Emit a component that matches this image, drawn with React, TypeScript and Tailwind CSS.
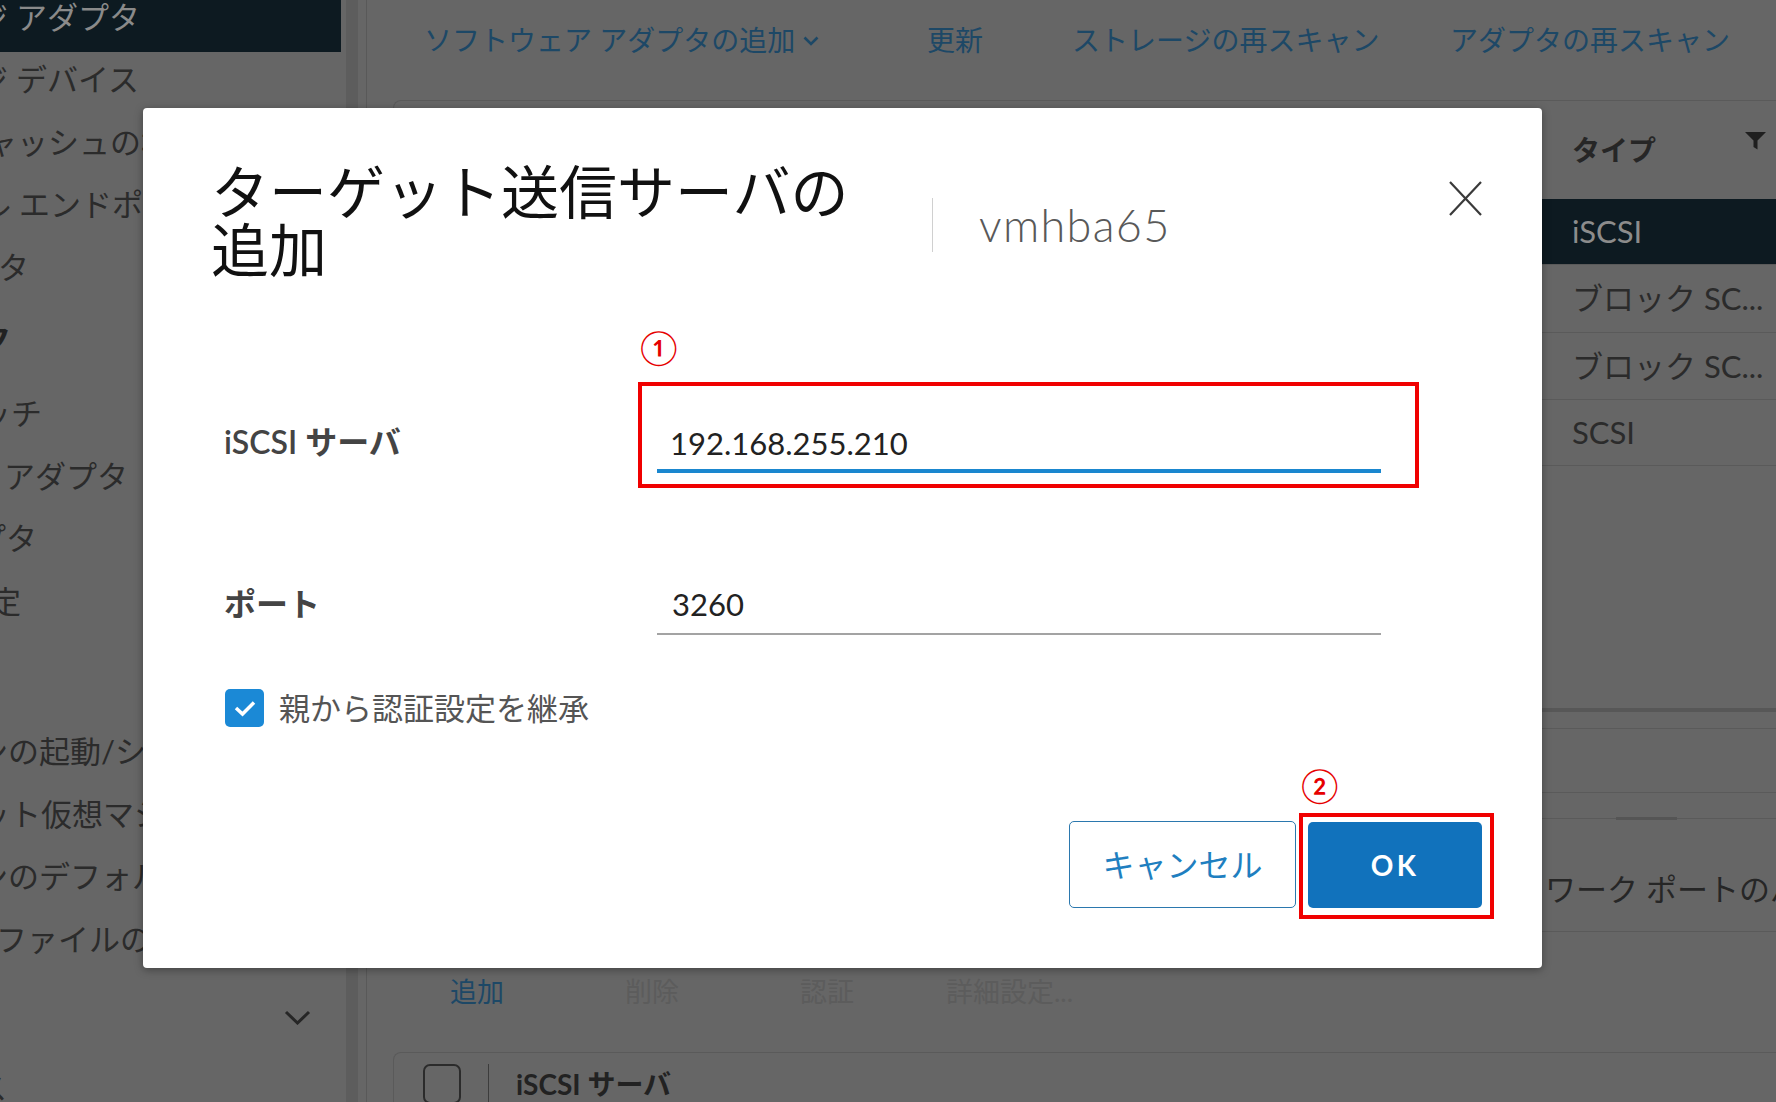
import React from "react";

const NAV = [
  { t: "ジ アダプタ", cls: "ml-[-23px]", row: "h-[62.5px] mt-[-10.5px] pb-[8px] bg-[#0d1a21] text-[#8a8a8a]" },
  { t: "ジ デバイス", cls: "ml-[-23px]", row: "h-[62.5px] pb-[8px]" },
  { t: "ャッシュの構成", cls: "ml-[-14px]", row: "h-[62.5px] pb-[8px]" },
  { t: "ル エンドポイント", cls: "ml-[-20px]", row: "h-[62.5px] pb-[8px]" },
  { t: "ルタ", cls: "ml-[-33px]", row: "h-[62.5px] pb-[8px]" },
  { t: "ク", cls: "ml-[-20px] font-bold text-[#222]", row: "h-[84px] pb-[12px]" },
  { t: "ッチ", cls: "ml-[-20px]", row: "h-[62.5px] pb-[8px]" },
  { t: "アダプタ", cls: "ml-[4px]", row: "h-[62.5px] pb-[8px]" },
  { t: "プタ", cls: "ml-[-25px]", row: "h-[62.5px] pb-[8px]" },
  { t: "定", cls: "ml-[-10px]", row: "h-[62.5px] pb-[8px]" },
  { t: "", cls: "", row: "h-[88px]" },
  { t: "ンの起動/シャットダウン", cls: "ml-[-23px]", row: "h-[62.5px] pb-[8px]" },
  { t: "ット仮想マシンの設定", cls: "ml-[-21px]", row: "h-[62.5px] pb-[8px]" },
  { t: "ンのデフォルトの場所", cls: "ml-[-23px]", row: "h-[62.5px] pb-[8px]" },
  { t: "ファイルの場所", cls: "ml-[-4px]", row: "h-[62.5px] pb-[8px]" },
];

const TYPES = [
  { t: "iSCSI", row: "h-[65px] bg-[#0d1a21] text-[#8c8c8c]" },
  { t: "ブロック SC...", row: "h-[68px] border-t border-[#5a5a5a] text-[#2b2b2b]" },
  { t: "ブロック SC...", row: "h-[67px] border-t border-[#5a5a5a] text-[#2b2b2b]" },
  { t: "SCSI", row: "h-[67px] border-t border-[#5a5a5a] border-b text-[#2b2b2b]" },
];

export default function App() {
  return (
    <div className="relative w-[1776px] h-[1102px] overflow-hidden bg-[#666666] font-['Lato','Noto_Sans_CJK_JP',sans-serif]">
      <div className="flex h-full">
        {/* Sidebar */}
        <aside className="w-[346px] shrink-0 overflow-hidden text-[31px] text-[#2b2b2b]">
          {NAV.map((n, i) => (
            <div key={i} className={`w-[341px] flex items-center whitespace-nowrap ${n.row}`}>
              <span className={`leading-[40px] ${n.cls}`}>{n.t}</span>
            </div>
          ))}
          <div className="w-[341px] h-[86px] flex items-center justify-end pr-[30px]">
            <svg width="27" height="15" viewBox="0 0 27 15" fill="none">
              <path d="M2 2 L13.5 13 L25 2" stroke="#262626" strokeWidth="3" />
            </svg>
          </div>
          <div className="w-[341px] h-[62.5px] pb-[8px] flex items-center whitespace-nowrap">
            <span className="leading-[40px] ml-[-24px]">ス</span>
          </div>
        </aside>
        <div className="w-[12px] shrink-0 bg-[#5d5d5d]" />
        <div className="w-[8px] shrink-0" />

        {/* Main */}
        <main className="flex-1 border-l border-[#595959] min-w-0 overflow-hidden">
          {/* Toolbar */}
          <div className="h-[80px] flex items-center pl-[57px] text-[28px] text-[#1d4866] whitespace-nowrap">
            <div className="w-[503px] flex items-center">
              <span>ソフトウェア アダプタの追加</span>
              <svg className="ml-[8px] mt-[2px]" width="16" height="10" viewBox="0 0 16 10" fill="none">
                <path d="M1.5 1.5 L8 8 L14.5 1.5" stroke="#1d4866" strokeWidth="2.6" />
              </svg>
            </div>
            <div className="w-[145px]">更新</div>
            <div className="w-[378px]">ストレージの再スキャン</div>
            <div>アダプタの再スキャン</div>
          </div>

          {/* Adapter table */}
          <div className="mt-[20px] ml-[26px] h-[608px] border-l border-t border-[#5a5a5a] rounded-tl-[8px] flex flex-col">
            <div className="h-[98px] shrink-0 flex">
              <div className="flex-1" />
              <div className="w-[222px] flex items-center pl-[18px] pr-[10px]">
                <span className="text-[28px] font-bold text-[#262626]">タイプ</span>
                <svg className="ml-auto mb-[18px]" width="21" height="18" viewBox="0 0 21 18">
                  <path d="M0 0 H21 L12.5 8.5 V17.5 L8.5 15 V8.5 Z" fill="#1f1f1f" />
                </svg>
              </div>
            </div>
            {TYPES.map((r, i) => (
              <div key={i} className={`shrink-0 flex ${r.row}`}>
                <div className="flex-1" />
                <div className="w-[222px] flex items-center pl-[18px] text-[31px] whitespace-nowrap">{r.t}</div>
              </div>
            ))}
          </div>

          {/* Lower panel */}
          <div className="h-[4px] bg-[#575757]" />
          <div className="h-[17px] border-b border-[#5a5a5a]" />
          <div className="h-[64px] border-b border-[#5a5a5a]" />
          <div className="h-[26px] border-b border-[#5a5a5a] flex items-end">
            <div className="ml-[1249px] w-[61px] h-[3px] bg-[#555] mb-[-2px]" />
          </div>
          <div className="h-[113px] border-b border-[#5a5a5a] flex items-end pb-[22px] pl-[1085px] whitespace-nowrap">
            <span className="leading-[40px] text-[31px] text-[#262626]">ネットワーク ポートのバインド</span>
          </div>
          <div className="h-[120px] flex items-center pl-[83px] text-[27px] whitespace-nowrap">
            <div className="w-[175px] text-[#1d4866]">追加</div>
            <div className="w-[175px] text-[#5c5c5c]">削除</div>
            <div className="w-[146px] text-[#5c5c5c]">認証</div>
            <div className="text-[#5c5c5c]">詳細設定...</div>
          </div>
          <div className="ml-[26px] h-[60px] border-l border-t border-[#5a5a5a] rounded-tl-[8px] pt-[11px] pl-[29px] flex items-start">
            <div className="w-[38px] h-[40px] border-2 border-[#2b2b2b] rounded-[7px]" />
            <div className="ml-[27px] w-px h-[40px] bg-[#3c3c3c]" />
            <div className="ml-[27px] h-[40px] flex items-center text-[28px] font-bold text-[#222]">iSCSI サーバ</div>
          </div>
        </main>
      </div>

      {/* Modal */}
      <div className="absolute left-[143px] top-[108px] w-[1399px] h-[860px] bg-white rounded-[4px] shadow-[0_2px_8px_rgba(0,0,0,0.35)] flex flex-col pl-[68px] pr-[60px] pt-[55px]">
        <div className="h-[116px] flex items-start">
          <div className="w-[680px] text-[58px] leading-[58px] text-[#111]">
            ターゲット送信サーバの
            <br />
            追加
          </div>
          <div className="ml-[41px] mt-[35px] w-px h-[54px] bg-[#d0d0d0]" />
          <div className="ml-[46px] mt-[35px] leading-[54px] text-[45px] tracking-[0.03em] font-light text-[#595959]">vmhba65</div>
          <svg className="ml-auto mt-[18px]" width="33" height="35" viewBox="0 0 33 35" fill="none">
            <path d="M1 1 L32 34 M32 1 L1 34" stroke="#3a3a3a" strokeWidth="2.2" />
          </svg>
        </div>

        {/* iSCSI server */}
        <div className="mt-[48px] flex items-start">
          <div className="w-[427px] pl-[13px] mt-[95px] leading-[40px] text-[32px] font-semibold text-[#444]">iSCSI サーバ</div>
          <div className="flex flex-col">
            <div className="pl-[2px] leading-[40px] text-[34px] text-[#e60000]">①</div>
            <div className="mt-[15px] w-[781px] h-[106px] border-4 border-[#f00000] pl-[15px] pr-[34px] pt-[37px]">
              <div className="pl-[13px] leading-[40px] text-[31px] text-[#222]">192.168.255.210</div>
              <div className="mt-[6px] h-[4px] bg-[#1a87cf]" />
            </div>
          </div>
        </div>

        {/* Port */}
        <div className="mt-[96px] flex items-start">
          <div className="w-[427px] pl-[13px] leading-[40px] text-[32px] font-semibold text-[#444]">ポート</div>
          <div className="pl-[19px]">
            <div className="w-[724px]">
              <div className="pl-[15px] leading-[40px] text-[31px] text-[#222]">3260</div>
              <div className="mt-[9px] h-[2px] bg-[#a3a3a3]" />
            </div>
          </div>
        </div>

        {/* Inherit checkbox */}
        <div className="mt-[53px] ml-[14px] flex items-center gap-[15px]">
          <div className="w-[39px] h-[38px] rounded-[5px] bg-[#1b89d6] flex items-center justify-center">
            <svg width="24" height="18" viewBox="0 0 24 18" fill="none">
              <path d="M3 9 L9.5 15 L21 3.5" stroke="#fff" strokeWidth="3.5" />
            </svg>
          </div>
          <span className="leading-[40px] text-[31px] text-[#555]">親から認証設定を継承</span>
        </div>

        {/* Buttons */}
        <div className="mt-[37px] -mr-[12px] flex justify-end items-end">
          <button className="mb-[11px] w-[227px] h-[87px] border-[1.5px] border-[#2b78ae] rounded-[5px] text-[32px] text-[#1f7fc0] flex items-center justify-center">
            キャンセル
          </button>
          <div className="ml-[3px] flex flex-col">
            <div className="pl-[2px] leading-[40px] text-[34px] text-[#e60000]">②</div>
            <div className="mt-[8px] w-[195px] h-[106px] border-4 border-[#f00000] pl-[5px] pt-[5px]">
              <button className="w-[174px] h-[86px] bg-[#1172bc] rounded-[5px] text-white font-bold text-[28px] tracking-[0.12em] flex items-center justify-center">
                OK
              </button>
            </div>
          </div>
        </div>
      </div>
    </div>
  );
}
